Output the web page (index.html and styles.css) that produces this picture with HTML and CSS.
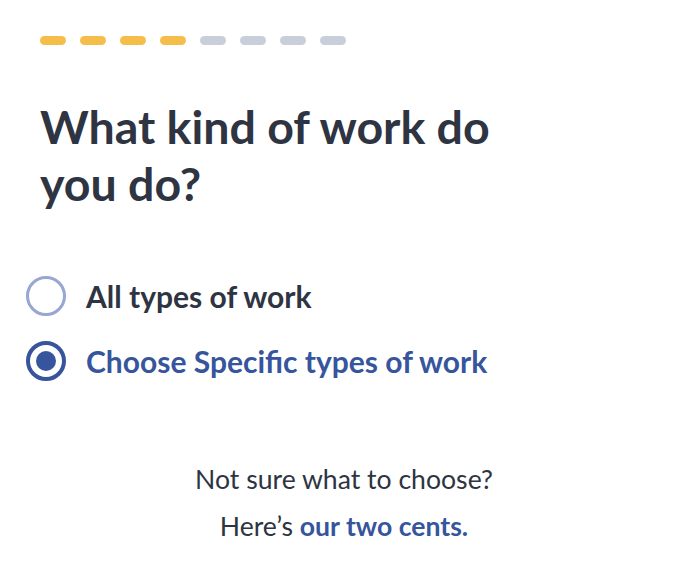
FILE: index.html
```html
<!DOCTYPE html>
<html>
<head>
<meta charset="utf-8">
<link rel="stylesheet" href="styles.css">
</head>
<body>
<div class="page">
  <div class="progress">
    <span class="dash done"></span>
    <span class="dash done"></span>
    <span class="dash done"></span>
    <span class="dash done"></span>
    <span class="dash"></span>
    <span class="dash"></span>
    <span class="dash"></span>
    <span class="dash"></span>
  </div>
  <h1 class="title">What kind of work do you do?</h1>
  <div class="options">
    <label class="option">
      <span class="radio"></span>
      <span class="label">All types of work</span>
    </label>
    <label class="option selected">
      <span class="radio"><span class="dot"></span></span>
      <span class="label">Choose Specific types of work</span>
    </label>
  </div>
  <div class="help">
    <p class="help-line">Not sure what to choose?</p>
    <p class="help-line">Here’s <a class="link">our two cents.</a></p>
  </div>
</div>
</body>
</html>
```
FILE: styles.css
```css
html, body {
  margin: 0;
  padding: 0;
  background: #ffffff;
}
body {
  font-family: Lato, "Noto Sans", sans-serif;
  color: #2e3442;
}
.page {
  width: 688px;
  height: 561px;
  box-sizing: border-box;
  padding: 36px 0 0 40px;
}
.progress {
  display: flex;
  gap: 14px;
}
.dash {
  width: 26px;
  height: 9px;
  border-radius: 5px;
  background: #c9cedb;
}
.dash.done {
  background: #f5be4b;
}
.title {
  margin: 53px 0 0 0;
  width: 480px;
  font-size: 46.5px;
  line-height: 57px;
  font-weight: 700;
  color: #2e3442;
}
.options {
  margin: 64px 0 0 -14px;
  display: flex;
  flex-direction: column;
  gap: 25px;
}
.option {
  display: flex;
  align-items: center;
  gap: 20px;
}
.radio {
  width: 40px;
  height: 40px;
  box-sizing: border-box;
  border-radius: 50%;
  border: 3px solid #97a6d2;
  display: flex;
  align-items: center;
  justify-content: center;
}
.selected .radio {
  border: 4px solid #36559c;
}
.dot {
  width: 20px;
  height: 20px;
  border-radius: 50%;
  background: #36559c;
}
.label {
  font-size: 30px;
  font-weight: 700;
  color: #2e3442;
}
.selected .label {
  color: #36559c;
}
.help {
  margin: 82px 0 0 -40px;
  text-align: center;
}
.help-line {
  margin: 0 0 15px 0;
  font-size: 26.6px;
  line-height: 32px;
  color: #2e3442;
}
.link {
  font-weight: 700;
  color: #36559c;
}
```
